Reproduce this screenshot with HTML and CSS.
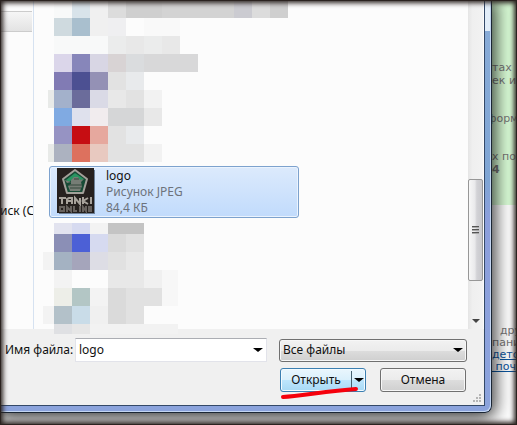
FILE: index.html
```html
<!DOCTYPE html>
<html lang="ru">
<head>
<meta charset="utf-8">
<title>Открыть файл</title>
<link rel="stylesheet" href="styles.css">
</head>
<body>
<div class="scene">
  <main class="dialog">
    <form class="panel">
      <div class="browser">
        <nav class="tree">
          <span class="toolbar-end"></span>
          <span class="drive">иск (C</span>
        </nav>
        <section class="files">
          <svg class="mosaic" width="252" height="162" viewBox="0 0 252 162" shape-rendering="crispEdges" aria-hidden="true">
            <path fill="#f8f9f9" d="M6 0h18v18H6zM6 36h54v18H6z"/>
            <path fill="#d8e3ea" d="M24 0h18v18H24z"/><path fill="#f0f0f0" d="M42 0h18v36H42z"/>
            <path fill="#dcdcdc" d="M60 0h18v18H60zM204 0h18v18h-18z"/><path fill="#cfcfcf" d="M78 0h36v18H78zM222 0h18v18h-18z"/><path fill="#d3d3d3" d="M114 0h72v18h-72z"/><path fill="#cbcbd1" d="M186 0h18v18h-18z"/>
            <path fill="#cfdadf" d="M6 18h18v18H6z"/><path fill="#a9bfce" d="M24 18h18v18H24z"/><path fill="#efeff1" d="M60 18h18v18H60z"/><path fill="#f9f9f9" d="M96 18h36v18H96z"/>
            <path fill="#ebecec" d="M60 36h18v18H60zM96 36h18v18H96z"/><path fill="#e8e8e8" d="M78 36h18v18H78zM114 36h18v18h-18z"/>
            <path fill="#dbd6ea" d="M6 54h18v18H6z"/><path fill="#8786ba" d="M24 54h18v18H24z"/><path fill="#d8d6e4" d="M42 54h18v18H42z"/><path fill="#d8d3d4" d="M60 54h18v18H60z"/><path fill="#dadcde" d="M78 54h18v18H78z"/><path fill="#d8d8d9" d="M96 54h54v18H96z"/>
            <path fill="#817bb4" d="M6 72h18v18H6z"/><path fill="#4c5092" d="M24 72h18v18H24z"/><path fill="#9491b5" d="M42 72h18v18H42z"/><path fill="#e2e2e2" d="M60 72h18v18H60zM78 90h18v18H78zM60 126h18v36H60zM78 144h18v18H78z"/><path fill="#e8eaec" d="M78 72h18v18H78zM78 126h18v18H78z"/>
            <path fill="#e8eae8" d="M0 90h6v18H0zM0 144h6v18H0z"/><path fill="#a3b1cb" d="M6 90h18v18H6z"/><path fill="#6b6c9b" d="M24 90h18v18H24z"/><path fill="#dadae6" d="M42 90h18v18H42z"/><path fill="#e8e8e8" d="M60 90h18v18H60zM96 108h18v18H96z"/><path fill="#f2f2f2" d="M96 90h18v18H96zM96 144h18v18H96z"/>
            <path fill="#80aae2" d="M6 108h18v18H6z"/><path fill="#dfe1ed" d="M24 108h18v18H24z"/><path fill="#f1ecee" d="M42 108h18v18H42z"/><path fill="#d5d6d7" d="M60 108h36v18H60z"/>
            <path fill="#9693c3" d="M6 126h18v18H6z"/><path fill="#c60d12" d="M24 126h18v18H24z"/><path fill="#e6a89e" d="M42 126h18v18H42z"/>
            <path fill="#acb2c0" d="M6 144h18v18H6z"/><path fill="#dd715e" d="M24 144h18v18H24z"/><path fill="#e8c9c0" d="M42 144h18v18H42z"/>
          </svg>
          <div class="file">
            <svg class="thumb" width="39" height="46" viewBox="0 0 39 46" aria-hidden="true">
              <path fill="#6d8198" d="M2 2h36v44H2z"/><path fill="#26211f" d="M0 0h37v45H0z"/>
              <path fill="#174b36" stroke="#a3a09a" stroke-width="2" stroke-linejoin="round" d="M18 2 30 11 26 25H10L6 11z"/>
              <path fill="#299461" d="m9 12 9-7 9 6-5 2-5-3-5 4z"/>
              <path fill="#767d75" d="m14 12 3-3h4l2 3 4-1-3 3 1 4-2 5H13l-2-5 3-2zM8 12l6 2-4 1z"/>
              <path stroke="#34483d" d="M12 17h13M13 20h11M17 11h5"/>
              <path fill="none" stroke="#a8a39c" stroke-width="2" d="M2 30h7M5 30v6M10 36v-5l2-1h3v6m-5-3h5M18 36v-6l5 6v-6M26 29v7m5-6-5 3 5 3M34 29v7"/>
              <path fill="none" stroke="#67625e" stroke-width="2" d="M3 39h4v4H3zM10 44v-5l4 4v-5M17 38v5h3M23 38v6M26 44v-5l3 4v-5M35 39h-3v4h3m-3-2h3"/>
            </svg>
            <div class="meta"><span class="name">logo</span><span>Рисунок JPEG</span><span>84,4 КБ</span></div>
          </div>
          <svg class="mosaic lower" width="136" height="111" viewBox="-5 0 136 111" shape-rendering="crispEdges" aria-hidden="true">
            <path fill="#e2e3ef" d="M6 0h18v11H6z"/><path fill="#d6daf0" d="M24 0h18v11H24zM42 11h18v18H42z"/><path fill="#f3f3f3" d="M42 0h18v11H42zM-5 29H6v18H-5zM6 47h18v18H6zM42 65h18v18H42zM-5 83H6v18H-5z"/><path fill="#c4c4c4" d="M60 0h36v11H60z"/>
            <path fill="#8b8fb6" d="M6 11h18v18H6z"/><path fill="#4c60d6" d="M24 11h18v18H24z"/><path fill="#dadada" d="M60 11h18v18H60zM60 65h18v36H60z"/><path fill="#e1e1e1" d="M78 11h18v18H78zM78 65h36v18H78zM78 83h18v18H78zM60 29h18v18H60z"/>
            <path fill="#a4b2c2" d="M6 29h18v18H6z"/><path fill="#a5a5bb" d="M24 29h18v18H24z"/><path fill="#dddde5" d="M42 29h18v18H42z"/><path fill="#e8e8e8" d="M78 29h18v36H78zM60 47h18v18H60z"/>
            <path fill="#f0f0f0" d="M96 47h18v18H96zM42 83h18v18H42z"/><path fill="#f7f7f7" d="M114 47h16v36h-16z"/>
            <path fill="#edeee8" d="M6 65h18v18H6z"/><path fill="#b3c6c5" d="M24 65h18v18H24z"/><path fill="#b3c1c9" d="M6 83h18v18H6z"/><path fill="#c9dce8" d="M24 83h18v18H24z"/>
            <path fill="#dfe0e3" d="M6 101h18v10H6z"/><path fill="#e6e6e6" d="M24 101h18v10H24z"/><path fill="#f2f2f2" d="M42 101h88v10H42z"/>
          </svg>
        </section>
        <div class="scrollbar">
          <div class="thumb-bar"><i></i><i></i><i></i></div>
          <span class="arrow small"></span>
        </div>
      </div>
      <div class="fields">
        <label for="filename">Имя файла:</label>
        <div class="combo"><input id="filename" type="text" value="logo"><span class="arrow"></span></div>
        <div class="filter"><select aria-label="Тип файлов"><option>Все файлы</option></select><span class="arrow"></span></div>
      </div>
      <div class="actions">
        <div class="split">
          <button class="open" type="button">Открыть</button><button class="more" type="button" aria-label="Другие варианты"><span class="arrow"></span></button>
          <svg class="mark" width="80" height="16" viewBox="0 0 80 16" aria-hidden="true"><path d="M3 11C20 10 48 5 76 3" fill="none" stroke="#f5000c" stroke-width="4" stroke-linecap="round"/></svg>
        </div>
        <button class="cancel" type="button">Отмена</button>
      </div>
      <svg class="grip" width="9" height="9" viewBox="0 0 9 9" aria-hidden="true"><path fill="#b5b5b5" d="M6 0h2v2H6zM3 3h2v2H3zM6 3h2v2H6zM0 6h2v2H0zM3 6h2v2H3zM6 6h2v2H6z"/></svg>
    </form>
  </main>
  <aside class="page">
    <div class="notice"><p>тах<br>ек и</p><p class="under">форма</p><p>х по<br><b>4</b></p></div>
    <div class="links"><span class="r">дру</span><span>пани</span><a href="#">детс</a><a href="#">&nbsp;поч</a></div>
  </aside>
  <div class="vignette"></div>
</div>
</body>
</html>
```
FILE: styles.css
```css
* { box-sizing: border-box; }
body { margin: 0; font: 12px/16px "Noto Sans", "Open Sans", sans-serif; color: #111; }
button, input, select { font: inherit; color: inherit; margin: 0; }
.scene {
  position: relative;
  display: grid;
  grid-template-columns: minmax(0, 1fr) 25px;
  min-height: 100vh;
  overflow: hidden;
  background: #fff;
}
.dialog {
  z-index: 1;
  margin-bottom: 12px;
  padding: 0 6px 6px 0;
  border: solid #1b2634;
  border-width: 0 1px 1px 0;
  border-radius: 0 0 7px 0;
  background: linear-gradient(#e2edf8 0 31px, #88abd7 31px, #7fa5d4 180px, #8c9fdc 220px, #8ba3dc);
  box-shadow: inset -1px -1px #c3d5f1, 0 2px 18px 3px #000c;
  display: flex;
}
.panel {
  position: relative;
  flex: 1;
  min-width: 0;
  display: flex;
  flex-direction: column;
  background: #f0f0f0;
  border: solid #344968;
  border-width: 0 1px 1px 0;
}
.browser { display: flex; height: 329px; background: #fcfcfc; }
.tree {
  width: 34px;
  border-right: 1px solid #d6e2f1;
  display: flex;
  flex-direction: column;
  overflow: hidden;
  white-space: nowrap;
}
.toolbar-end {
  height: 21px;
  margin: 11px 1px 0 0;
  border: solid #ccc;
  border-width: 1px 0;
  background: linear-gradient(#f6f6f6, #e3e3e3);
}
.drive { margin-top: 171px; }
.files { flex: 1; min-width: 0; display: flex; flex-direction: column; align-items: flex-start; padding-left: 14px; }
.mosaic { display: block; flex: none; }
.lower { margin: 5px 0 0 -5px; z-index: 1; }
.file {
  display: flex;
  gap: 10px;
  width: 250px;
  height: 52px;
  margin: 4px 0 0 1px;
  padding: 1px 7px;
  border: 1px solid #7da2ce;
  border-radius: 3px;
  background: linear-gradient(#dceafc, #c1dbfc);
  box-shadow: inset 0 0 0 1px #eaf3fe;
}
.meta { display: flex; flex-direction: column; color: #6d737c; }
.name { color: #111; }
.scrollbar {
  width: 15px;
  margin-right: 1px;
  background: linear-gradient(90deg, #e5e5e5, #efefef 30%, #f2f2f2);
  display: flex;
  flex-direction: column;
  align-items: center;
}
.thumb-bar {
  width: 15px;
  height: 102px;
  margin: 179px 0 38px;
  border: 1px solid #979797;
  border-radius: 2px;
  background: linear-gradient(90deg, #f7f7f7, #e9e9eb 45%, #d2d2d6 60%, #c8c8cc);
  display: flex;
  flex-direction: column;
  align-items: center;
  justify-content: center;
  gap: 1px;
}
.thumb-bar i { width: 7px; height: 2px; border-top: 1px solid #555; background: #aaa; }
.arrow {
  border: 5px solid transparent;
  border-top: 4px solid #000;
  border-bottom: 0;
  pointer-events: none;
}
.small { border-width: 4px 4px 0; border-top-color: #444; }
.fields { display: flex; align-items: center; margin-top: 9px; padding: 0 17px 0 5px; height: 24px; }
.fields label { width: 70px; white-space: nowrap; }
.combo { flex: 1; min-width: 0; height: 24px; border: 1px solid #e2e3ea; border-top-color: #abadb3; background: #fff; display: flex; align-items: center; padding-right: 3px; }
.combo input { flex: 1; min-width: 0; border: 0; padding: 0 3px; background: none; outline: 0; }
.filter { display: flex; align-items: center; width: 188px; height: 23px; margin-left: 12px; padding-right: 3px; border: 1px solid #707070; border-radius: 3px; background: linear-gradient(#f2f2f2, #ebebeb 50%, #ddd 50%, #cfcfcf); box-shadow: inset 0 0 0 1px #f7f7f7; }
.filter select { flex: 1; appearance: none; border: 0; padding: 0 3px; background: none; }
.actions { display: flex; justify-content: flex-end; gap: 14px; margin-top: 6px; padding-right: 18px; }
.split { position: relative; display: flex; width: 86px; height: 24px; border: 1px solid #3c7fb1; border-radius: 3px; background: linear-gradient(#eaf6fd, #d9f0fc 50%, #bee6fd 50%, #a7d9f5); box-shadow: inset 0 0 0 1px #f3fbff; }
.open, .more { border: 0; padding: 0; background: none; }
.open { flex: 1; }
.more { width: 14px; margin: 2px 0; border-left: 1px solid #45606f; display: grid; place-items: center; }
.mark { position: absolute; left: -1px; top: 17px; }
.cancel { width: 86px; height: 24px; border: 1px solid #707070; border-radius: 3px; padding: 0; background: linear-gradient(#f2f2f2, #ebebeb 50%, #ddd 50%, #cfcfcf); box-shadow: inset 0 0 0 1px #f7f7f7; }
.grip { position: absolute; right: 2px; bottom: 2px; }
.page { font: 11px/13px "DejaVu Sans", sans-serif; color: #777; white-space: nowrap; }
.notice { height: 205px; padding-top: 61px; background: #d9fcd6; }
.notice p { margin: 0 0 25px; }
.notice .under { text-indent: -5px; }
.links { display: flex; flex-direction: column; margin-top: 120px; line-height: 12px; }
.links a { color: #0b559f; }
.r { padding-left: 8px; }
.vignette {
  position: absolute;
  inset: 0;
  z-index: 2;
  pointer-events: none;
  box-shadow: inset 0 0 0 1px #2b2320, inset 0 0 5px 3px #2b2320;
}
```
